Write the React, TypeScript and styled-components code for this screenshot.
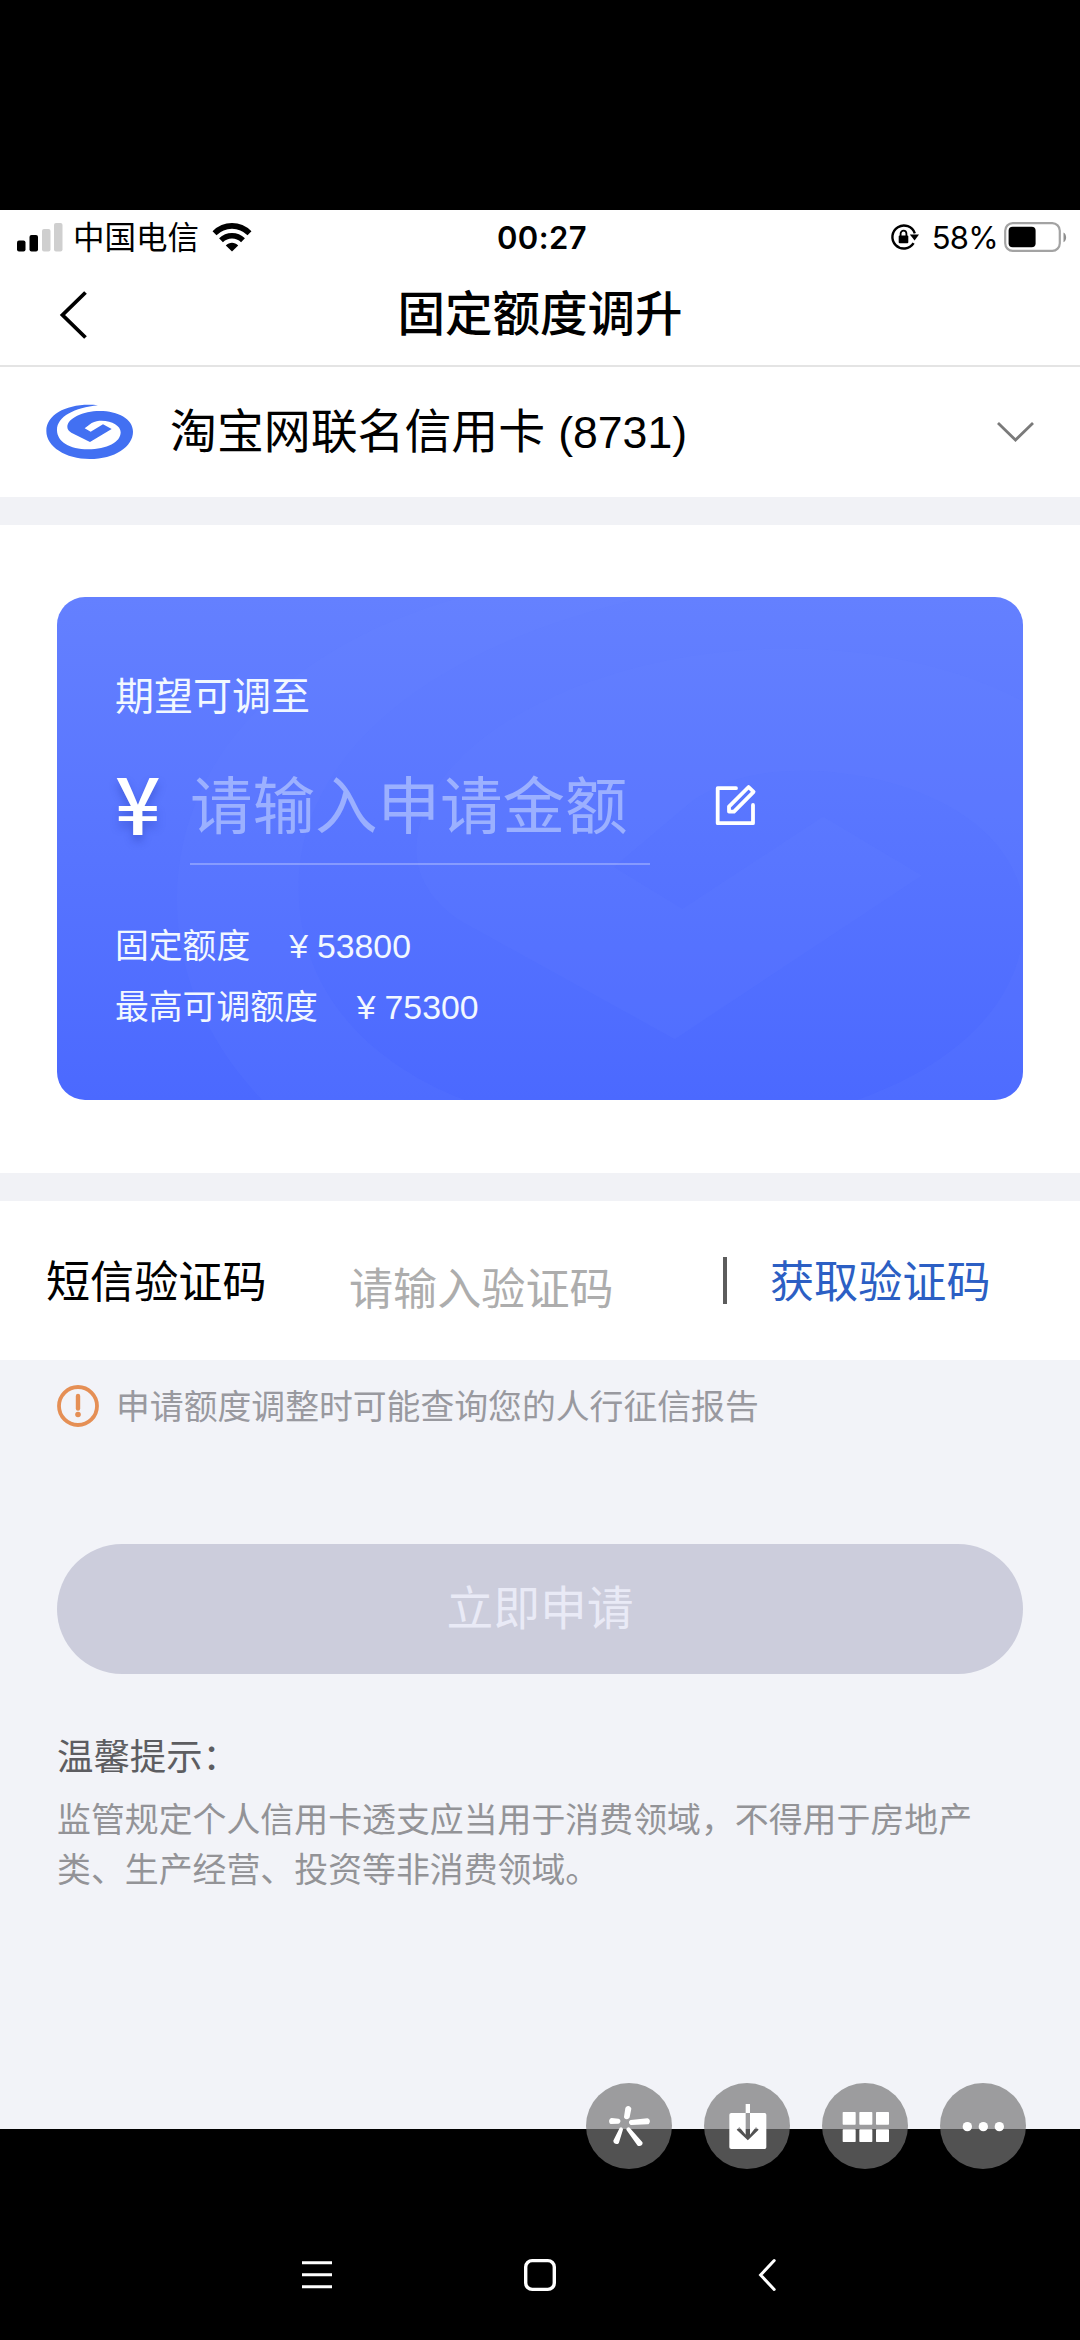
import React from "react";
import styled, { createGlobalStyle } from "styled-components";

const GlobalStyle = createGlobalStyle`
  * { box-sizing: border-box; }
  body {
    margin: 0;
    background: #000;
    font-family: "Liberation Sans", "Noto Sans CJK SC", sans-serif;
  }
`;

const Phone = styled.div`
  position: relative;
  width: 1080px;
  height: 2340px;
  padding-top: 210px;
  background: #000;
  display: flex;
  flex-direction: column;
  white-space: nowrap;
`;

const Screen = styled.main`
  height: 1919px;
  background: #f2f3f8;
  display: flex;
  flex-direction: column;
`;

const StatusBar = styled.div`
  height: 54px;
  background: #fff;
  display: grid;
  grid-template-columns: 1fr auto 1fr;
  align-items: center;
  padding: 0 13px 0 17px;
  color: #000;
`;

const StatusGroup = styled.div<{ $end?: boolean }>`
  display: flex;
  align-items: center;
  justify-content: ${(p) => (p.$end ? "flex-end" : "flex-start")};
`;

const Carrier = styled.span`
  font-size: 31.5px;
  line-height: 52px;
  padding-top: 2px;
  margin: 0 13px 0 8px;
`;

const Clock = styled.span`
  font-family: Inter, sans-serif;
  font-size: 31px;
  font-weight: 600;
  letter-spacing: 0.4px;
`;

const Percent = styled.span`
  font-family: Inter, sans-serif;
  font-size: 31px;
  letter-spacing: -0.7px;
  margin: 0 6px 0 12px;
`;

const NavBar = styled.header`
  height: 103px;
  background: #fff;
  border-bottom: 2px solid #e4e4e4;
  display: grid;
  grid-template-columns: 100px 1fr 100px;
  align-items: center;
`;

const BackButton = styled.div`
  padding-left: 57px;
  display: flex;
`;

const Title = styled.h1`
  margin: 0;
  padding-top: 1px;
  font-size: 47.5px;
  font-weight: 500;
  line-height: 60px;
  text-align: center;
  color: #000;
`;

const CardSelect = styled.div`
  height: 130px;
  background: #fff;
  display: flex;
  align-items: center;
  padding: 0 46px;
`;

const CardName = styled.span`
  flex: 1;
  margin-left: 37px;
  font-size: 46.9px;
  line-height: 60px;
  color: #000;
`;

const CardTail = styled.span`
  font-size: 44.6px;
`;

const Gap = styled.div`
  height: 28px;
  flex: none;
  background: #f1f2f6;
`;

const LimitSection = styled.section`
  height: 648px;
  background: #fff;
  padding: 72px 57px 0;
`;

const LimitCard = styled.div`
  position: relative;
  overflow: hidden;
  height: 503px;
  border-radius: 28px;
  padding: 71px 58px 0;
  background: linear-gradient(#6480ff, #4b69ff);
  color: #f2f8ff;
`;

const Watermark = styled.svg`
  position: absolute;
  left: 0;
  top: 0;
`;

const LimitLabel = styled.div`
  position: relative;
  font-size: 39px;
  line-height: 58px;
`;

const AmountRow = styled.div`
  position: relative;
  display: flex;
  align-items: flex-start;
  height: 163px;
  margin-top: 27px;
`;

const Currency = styled.span`
  width: 75px;
  font-family: "Noto Sans CJK SC", sans-serif;
  font-size: 80px;
  font-weight: 500;
  line-height: 94px;
  color: #fff;
  text-shadow: 0 6px 8px rgba(30, 50, 160, 0.35);
`;

const AmountField = styled.div`
  width: 460px;
  height: 112px;
  border-bottom: 2px solid rgba(255, 255, 255, 0.28);
  font-size: 62.5px;
  line-height: 108px;
  color: rgba(215, 228, 255, 0.52);
`;

const EditButton = styled.div`
  margin: 30px 0 0 64px;
  display: flex;
`;

const LimitRow = styled.div`
  position: relative;
  display: flex;
  gap: 39px;
  font-size: 33.8px;
  line-height: 61px;
`;

const Money = styled.span`
  display: flex;
  align-items: baseline;
  height: 61px;
  gap: 9px;
`;

const Yen = styled.span`
  font-family: "Liberation Sans", sans-serif;
`;

const CodeRow = styled.section`
  height: 159px;
  background: #fff;
  display: flex;
  align-items: center;
  padding: 0 46px 0 46px;
  font-size: 44.1px;
  line-height: 60px;
`;

const CodeLabel = styled.span`
  color: #000;
  width: 303px;
  padding-top: 4px;
`;

const CodePlaceholder = styled.span`
  color: #adadad;
  width: 374px;
  padding-top: 18px;
`;

const Divider = styled.i`
  width: 4px;
  height: 47px;
  background: #5c5c5c;
`;

const GetCode = styled.span`
  margin-left: 43px;
  padding-top: 4px;
  color: #2c5fc4;
`;

const Notice = styled.div`
  height: 184px;
  padding: 17px 57px 0;
  display: flex;
  align-items: flex-start;
  font-size: 33.85px;
  line-height: 60px;
  color: #99999f;
`;

const NoticeIcon = styled.svg`
  margin: 8px 17px 0 0;
`;

const Submit = styled.div`
  height: 130px;
  margin: 0 57px;
  border-radius: 65px;
  background: #cccddc;
  display: flex;
  align-items: center;
  justify-content: center;
  font-size: 46.8px;
  line-height: 60px;
  color: #e9eaf6;
`;

const Tips = styled.section`
  padding: 60px 57px 0;
`;

const TipsTitle = styled.div`
  font-size: 36.4px;
  line-height: 48px;
  color: #5d5d61;
`;

const TipsBody = styled.p`
  margin: 14px 0 0;
  font-size: 33.9px;
  line-height: 49.5px;
  color: #939397;
`;

const FloatingActions = styled.div`
  position: absolute;
  right: 54px;
  top: 2083px;
  display: flex;
  gap: 32px;
`;

const Bubble = styled.div`
  width: 86px;
  height: 86px;
  border-radius: 50%;
  background: rgba(118, 118, 118, 0.695);
`;

const SystemNav = styled.nav`
  flex: 1;
  display: flex;
  gap: 191px;
  padding: 127px 0 0 301px;
`;

const SPIRAL =
  "M185 31C100 22 30 55 30 108C30 155 88 192 160 192C235 192 290 155 290 110C290 72 245 48 190 48C140 48 93 70 93 96C93 103 98 109 105 113L161 141L226 102L200 88L163 110L145 100L166 84C176 78 186 77 196 77C228 78 253 92 253 112C253 142 212 163 155 163C100 163 62 140 62 105C62 65 115 38 185 31Z";

const SignalIcon = () => (
  <svg width="48" height="30" viewBox="0 0 48 30">
    <rect x="0" y="18.5" width="8.5" height="11" rx="2" />
    <rect x="12.5" y="13" width="8.5" height="16.5" rx="2" />
    <rect x="25" y="7" width="8.5" height="22.5" rx="2" fill="#cfcfcf" />
    <rect x="37" y="1" width="8.5" height="28.5" rx="2" fill="#cfcfcf" />
  </svg>
);

const WifiIcon = () => (
  <svg width="40" height="30" viewBox="0 0 40 30">
    <g fill="none" stroke="#000" strokeWidth="5.6">
      <path d="M2.5 11.2C12.5 1.4 27.5 1.4 37.5 11.2" />
      <path d="M9 18.2C15.3 12.2 24.7 12.2 31 18.2" />
    </g>
    <path d="M13.8 23.4C17.5 20 22.5 20 26.2 23.4L20 29.6Z" />
  </svg>
);

const RotationLockIcon = () => (
  <svg width="30" height="28" viewBox="0 0 30 28">
    <path d="M23.6 20.2A11.5 11.5 0 1 1 24.8 10.4" fill="none" stroke="#000" strokeWidth="2.4" />
    <path d="M19.8 11.6H29L24.6 17.4Z" />
    <rect x="8.7" y="12.6" width="9.6" height="7.6" rx="1" />
    <path d="M10.6 13V10.6a2.9 2.9 0 0 1 5.8 0V13" fill="none" stroke="#000" strokeWidth="1.8" />
  </svg>
);

const BatteryIcon = () => (
  <svg width="63" height="30" viewBox="0 0 63 30">
    <rect x="1.2" y="1.2" width="54.6" height="27.6" rx="7.5" fill="none" stroke="#a3a3a3" strokeWidth="2.2" />
    <rect x="4.6" y="4.8" width="27" height="20.4" rx="4" />
    <path d="M59.5 10.4C63 12 63 18.6 59.5 20.2Z" fill="#8f8f8f" />
  </svg>
);

export default function App() {
  return (
    <>
      <GlobalStyle />
      <Phone>
        <Screen>
          <StatusBar>
            <StatusGroup>
              <SignalIcon />
              <Carrier>中国电信</Carrier>
              <WifiIcon />
            </StatusGroup>
            <Clock>00:27</Clock>
            <StatusGroup $end>
              <RotationLockIcon />
              <Percent>58%</Percent>
              <BatteryIcon />
            </StatusGroup>
          </StatusBar>

          <NavBar>
            <BackButton>
              <svg width="32" height="50" viewBox="0 0 32 50" fill="none" stroke="#000" strokeWidth="3.8">
                <path d="M28.5 2.5L5.5 25L28.5 47.5" />
              </svg>
            </BackButton>
            <Title>固定额度调升</Title>
          </NavBar>

          <CardSelect>
            <svg width="87" height="56" viewBox="29 27 261 168">
              <path d={SPIRAL} fill="#4270f2" />
            </svg>
            <CardName>
              淘宝网联名信用卡 <CardTail>(8731)</CardTail>
            </CardName>
            <svg width="38" height="22" viewBox="0 0 38 22" fill="none" stroke="#7a7a7a" strokeWidth="2.8">
              <path d="M2 2L19.5 19L37 2" />
            </svg>
          </CardSelect>

          <Gap />

          <LimitSection>
            <LimitCard>
              <Watermark width="966" height="503" viewBox="0 0 966 503">
                <path
                  d={SPIRAL}
                  fill="#6f8cff"
                  opacity="0.11"
                  transform="translate(6 -150) scale(3.8 4.2)"
                />
              </Watermark>
              <LimitLabel>期望可调至</LimitLabel>
              <AmountRow>
                <Currency>¥</Currency>
                <AmountField>请输入申请金额</AmountField>
                <EditButton>
                  <svg width="44" height="44" viewBox="0 0 44 44" fill="none" stroke="#fff" strokeWidth="3.8" strokeLinejoin="round" strokeLinecap="round">
                    <path d="M22 5.2H3.7V40.2H39V22" />
                    <path d="M15 23.6L34.6 4L39.6 8.8L20 28.6H15Z" />
                  </svg>
                </EditButton>
              </AmountRow>
              <LimitRow>
                <span>固定额度</span>
                <Money>
                  <Yen>¥</Yen>
                  <span>53800</span>
                </Money>
              </LimitRow>
              <LimitRow>
                <span>最高可调额度</span>
                <Money>
                  <Yen>¥</Yen>
                  <span>75300</span>
                </Money>
              </LimitRow>
            </LimitCard>
          </LimitSection>

          <Gap />

          <CodeRow>
            <CodeLabel>短信验证码</CodeLabel>
            <CodePlaceholder>请输入验证码</CodePlaceholder>
            <Divider />
            <GetCode>获取验证码</GetCode>
          </CodeRow>

          <Notice>
            <NoticeIcon width="42" height="42" viewBox="0 0 42 42">
              <circle cx="21" cy="21" r="19" fill="none" stroke="#e58f55" strokeWidth="3.8" />
              <path d="M21 11V23.5" stroke="#e58f55" strokeWidth="4.4" strokeLinecap="round" />
              <circle cx="21" cy="29.5" r="2.8" fill="#e58f55" />
            </NoticeIcon>
            <span>申请额度调整时可能查询您的人行征信报告</span>
          </Notice>

          <Submit>立即申请</Submit>

          <Tips>
            <TipsTitle>温馨提示：</TipsTitle>
            <TipsBody>
              监管规定个人信用卡透支应当用于消费领域，不得用于房地产
              <br />
              类、生产经营、投资等非消费领域。
            </TipsBody>
          </Tips>
        </Screen>

        <SystemNav>
          <svg width="31" height="40" viewBox="0 0 31 40" stroke="#fff" strokeWidth="3">
            <path d="M1 6.7H31M1 18.7H31M1 30.7H31" />
          </svg>
          <svg width="43" height="40" viewBox="0 0 43 40" fill="none" stroke="#fff" strokeWidth="3.4">
            <rect x="2.7" y="4.6" width="28.6" height="28.8" rx="6.5" />
          </svg>
          <svg width="20" height="40" viewBox="0 0 20 40" fill="none" stroke="#fff" strokeWidth="3" strokeLinecap="round">
            <path d="M17.2 4.5L3.6 19L17.2 33.5" />
          </svg>
        </SystemNav>

        <FloatingActions>
          <Bubble>
            <svg width="86" height="86" viewBox="0 0 258 258" fill="#fff" stroke="#fff" strokeWidth="10" strokeLinejoin="round">
              <path d="M119 102L123 76Q127 72 131 77L126 102Q122 105 119 102Z" />
              <path d="M97 112L77 110Q73 113 75 118L97 117Q100 114 97 112Z" />
              <path d="M135 116L184 111Q189 114 185 119L136 121Q132 118 135 116Z" />
              <path d="M128 138L165 180Q164 185 158 184L126 139Z" />
              <path d="M105 138L87 174Q88 179 94 178L106 139Z" />
            </svg>
          </Bubble>
          <Bubble>
            <svg width="86" height="86" viewBox="0 0 258 258">
              <path
                fill="#fff"
                fillRule="evenodd"
                d="M125 63h13v27h-13zM82 90H125V155L106 132L98 140L131.5 172L164 140L156 132L138 155V90H182Q187 90 187 95V193Q187 198 182 198H82Q76 198 76 193V95Q76 90 82 90Z"
              />
            </svg>
          </Bubble>
          <Bubble>
            <svg width="86" height="86" viewBox="0 0 258 258" fill="#fff">
              {[62, 112, 162].map((x) =>
                [87, 139].map((y) => <rect key={`${x}-${y}`} x={x} y={y} width="39" height="38" rx="2" />)
              )}
            </svg>
          </Bubble>
          <Bubble>
            <svg width="86" height="86" viewBox="0 0 258 258" fill="#fff">
              <circle cx="82" cy="131" r="14" />
              <circle cx="130" cy="131" r="14" />
              <circle cx="178" cy="131" r="14" />
            </svg>
          </Bubble>
        </FloatingActions>
      </Phone>
    </>
  );
}
